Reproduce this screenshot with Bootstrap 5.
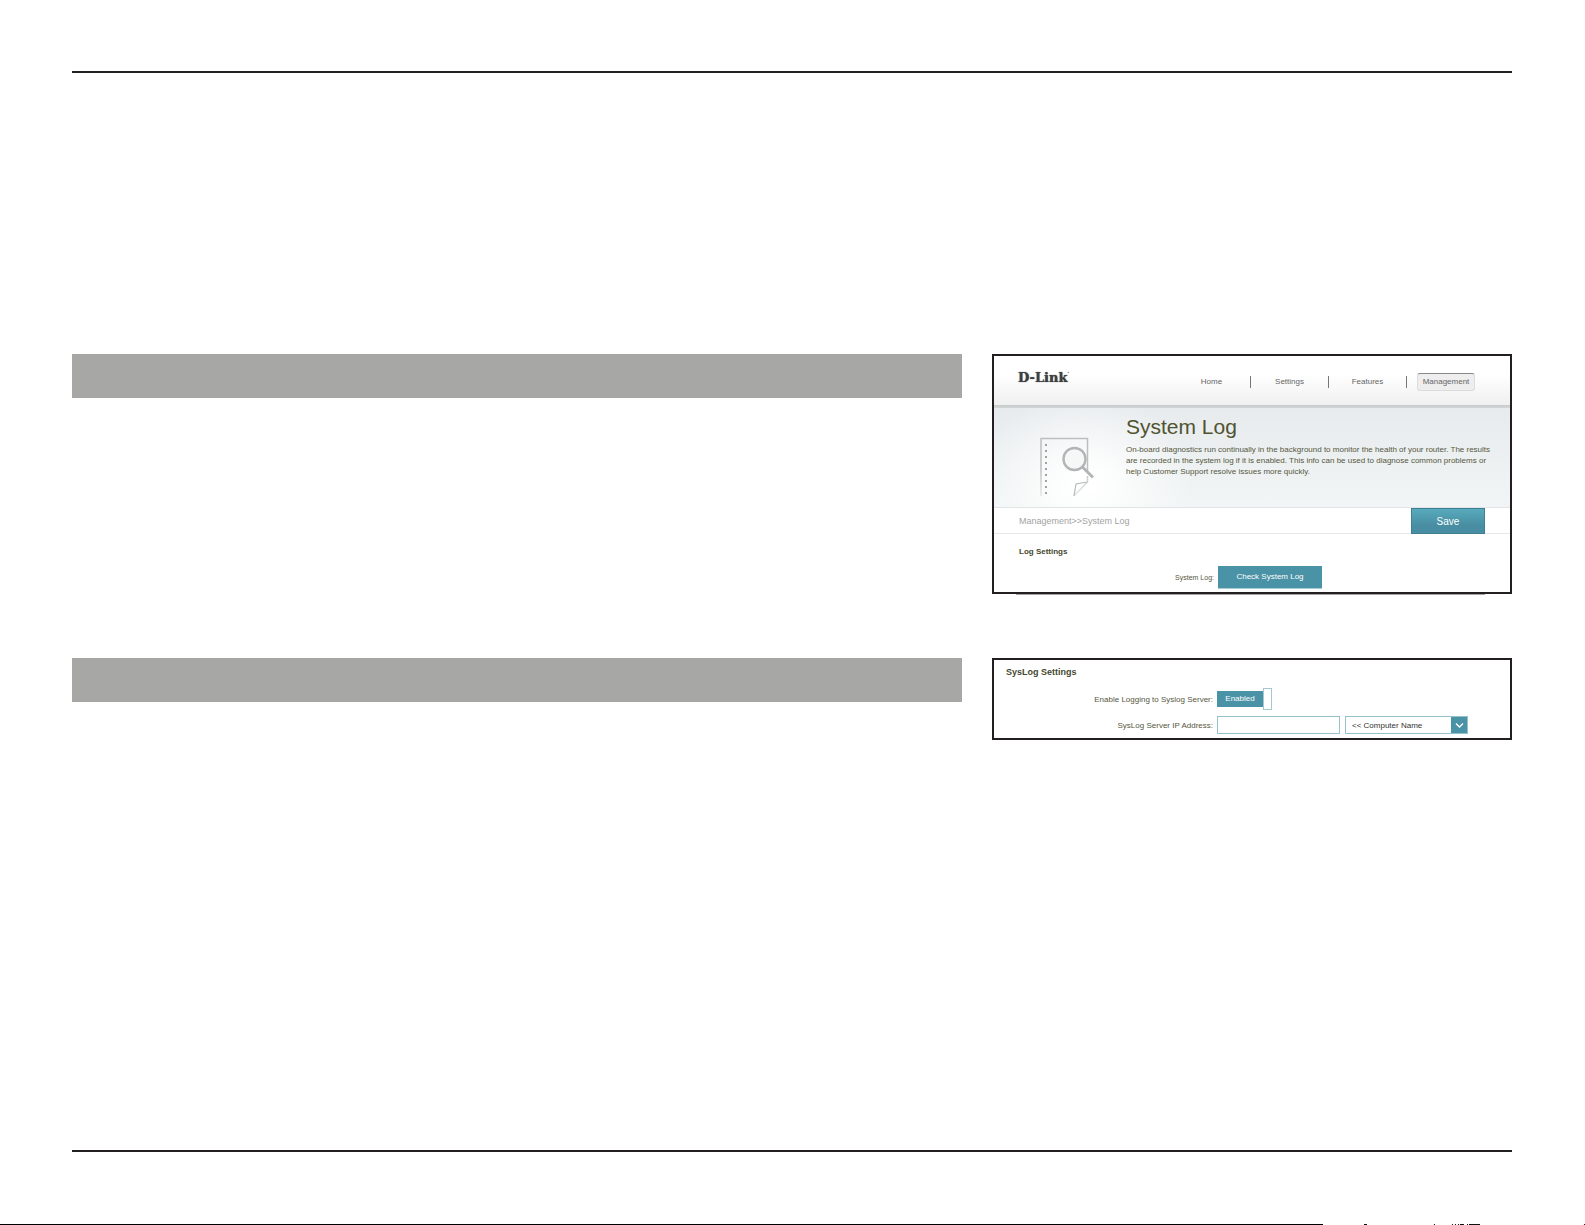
<!DOCTYPE html>
<html lang="en">
<head>
<meta charset="utf-8">
<meta name="viewport" content="width=device-width, initial-scale=1">
<title>System Log</title>
<link href="https://cdn.jsdelivr.net/npm/bootstrap@5.3.0/dist/css/bootstrap.min.css" rel="stylesheet">
<style>
  body { font-family: "Liberation Sans", Arial, sans-serif; font-size: 8px; line-height: 11px; color: #55573e; background: #fff; }
  .sheet { padding: 71px 73px 72px 72px; }
  .sheet-rule { height: 2px; background: #231f20; }
  .sections { padding-top: 281px; gap: 64px; }
  .section-row { gap: 30px; }
  .section-main { flex: 890 1 0; min-width: 0; }
  .section-side { flex: 520 1 0; min-width: 0; }
  .title-bar { height: 44px; background: #a7a7a5; }
  .panel { border: 2px solid #231f20; background: #fff; }
  .panel-log { height: 240px; }
  .panel-log::after { content: ""; position: absolute; left: 22px; right: 25px; bottom: -3px; height: 1px; background: #a3a3a3; }
  .panel-syslog { height: 82px; }

  .top-bar { height: 52px; padding: 0 35px 0 24px; background: linear-gradient(#fff 35%, #f1f0f0 94%, #c9cccc 95%, #d3d6d6 100%); }
  .brand-mark { font-family: "DejaVu Serif", serif; font-weight: 700; font-size: 13px; line-height: 16px; color: #3f4042; margin-top: 14px; text-shadow: 0 0 1px #3f4042; }
  .brand-mark sup { font-size: 4px; top: -7px; }
  .main-nav { margin-top: 17px; }
  .main-nav li { width: 78px; height: 12px; margin-top: 3px; border-right: 1px solid #777; text-align: center; }
  .main-nav li:last-child { width: 58px; height: auto; margin: 0 0 0 10px; border: 0; }
  .main-nav a { color: #666; text-decoration: none; }
  .main-nav .current { display: block; height: 18px; line-height: 15px; background: #eeeeef; border: 1px solid #dcdcdc; border-top-color: #888; border-radius: 3px; }

  .hero { height: 100px; padding-right: 15px; border-bottom: 1px solid #e0e4e5;
    background: radial-gradient(ellipse 110px 90px at 90px 75px, #fff 10%, rgba(255,255,255,0) 100%), linear-gradient(#e7ebed, #f1f5f5); }
  .hero-icon { width: 132px; padding: 28px 0 0 44px; }
  .hero h1 { font-size: 21px; line-height: 24px; font-weight: 400; margin: 7px 0 5px; color: #50532f; }
  .crumb-bar { height: 26px; padding: 0 25px; border-bottom: 1px solid #e8e8e8; font-size: 9px; line-height: 13px; color: #a3a3a3; }
  .crumb-bar span { padding-top: 2px; }
  .save-btn { width: 74px; height: 26px; padding: 0; font-size: 10px; line-height: 26px; color: #fff; border: 1px solid #3f7f92; border-radius: 0; background: linear-gradient(#57aabc, #498da2 70%); }
  .block-title { font-size: 8px; line-height: 11px; font-weight: 700; color: #45482f; margin: 0; }
  .panel-log .block-title { padding: 12px 25px 0; }
  .panel-syslog .block-title { font-size: 9px; padding: 7px 12px 0; }
  .form-line { gap: 4px; }
  .form-line label { width: 219px; text-align: right; }
  .check-line { margin-top: 9px; }
  .check-line label { width: 220px; font-size: 7px; }
  .teal-btn { height: 23px; width: 104px; padding: 0; font-size: 8px; line-height: 22px; color: #fff; background: #4a92a6; border: 0; border-bottom: 1px solid #a9cdd6; border-radius: 0; }
  .switch-btn { padding: 0; border: 0; background: none; }
  .switch-on { width: 46px; height: 16px; line-height: 16px; background: #4a92a6; color: #fff; }
  .switch-knob { width: 9px; height: 22px; border: 1px solid #a3c8d0; background: #fff; }
  .field { width: 123px; height: 18px; padding: 0 6px; font-size: 8px; line-height: 11px; border: 1px solid #97c1ca; border-radius: 0; background: #fff; color: #333; }
  .picker { width: 123px; height: 18px; border: 1px solid #97c1ca; }
  .picker select { appearance: none; border: 0; padding: 0 0 0 6px; font-size: 8px; line-height: 11px; color: #333; background: #fff; min-width: 0; }
  .picker svg { width: 16px; background: #4a92a6; }
  .switch-line { margin-top: 10px; }
  .address-line { margin-top: 6px; }
  .fields { gap: 5px; }
  .next-edge { height: 1px; }
  .next-edge-line { width: 83.5%; background: #000; }
</style>
</head>
<body>
<div class="d-flex flex-column min-vh-100">
  <main class="sheet flex-grow-1 d-flex flex-column">
    <div class="sheet-rule"></div>
    <div class="sections d-flex flex-column flex-grow-1">
      <section class="section-row d-flex">
        <div class="section-main"><div class="title-bar"></div></div>
        <div class="section-side">
          <div class="panel panel-log position-relative">
            <header class="top-bar d-flex justify-content-between align-items-start">
              <div class="brand-mark">D-Link<sup>’</sup></div>
              <nav aria-label="Main">
                <ul class="main-nav list-unstyled d-flex mb-0">
                  <li><a href="#">Home</a></li>
                  <li><a href="#">Settings</a></li>
                  <li><a href="#">Features</a></li>
                  <li><a class="current" href="#" aria-current="page">Management</a></li>
                </ul>
              </nav>
            </header>
            <div class="hero d-flex">
              <div class="hero-icon flex-shrink-0">
                <svg width="60" height="62" viewBox="0 0 60 62" fill="none" aria-hidden="true">
                  <defs><linearGradient id="fade" gradientUnits="userSpaceOnUse" x1="0" y1="2" x2="0" y2="62"><stop offset=".5" stop-color="#bcbfc0"/><stop offset="1" stop-color="#e9ebeb"/></linearGradient></defs>
                  <path d="M3 60V2.500H49.500V36M49.500 40V46L36 60" stroke="url(#fade)" stroke-width="1.500"/>
                  <path d="M36 60L38 48L49 46" stroke="#b5b8b9" stroke-width="1.200"/>
                  <path d="M8 8V58" stroke="#a0a3a4" stroke-width="2" stroke-dasharray="2 4"/>
                  <circle cx="36.500" cy="23" r="11" fill="#f6f8f8" stroke="#b3b4b5" stroke-width="2.400"/>
                  <path d="M44.500 31L55 41.500" stroke="#b3b4b5" stroke-width="3"/>
                </svg>
              </div>
              <div>
                <h1>System Log</h1>
                <p class="mb-0">On-board diagnostics run continually in the background to monitor the health of your router. The results are recorded in the system log if it is enabled. This info can be used to diagnose common problems or help Customer Support resolve issues more quickly.</p>
              </div>
            </div>
            <div class="crumb-bar d-flex justify-content-between align-items-center">
              <span>Management&gt;&gt;System Log</span>
              <button type="button" class="btn save-btn">Save</button>
            </div>
            <h2 class="block-title">Log Settings</h2>
            <div class="form-line check-line d-flex align-items-center">
              <label for="check">System Log:</label>
              <button type="button" id="check" class="btn teal-btn">Check System Log</button>
            </div>
          </div>
        </div>
      </section>
      <section class="section-row d-flex">
        <div class="section-main"><div class="title-bar"></div></div>
        <div class="section-side">
          <form class="panel panel-syslog">
            <h2 class="block-title">SysLog Settings</h2>
            <div class="form-line switch-line d-flex align-items-center">
              <label for="logging">Enable Logging to Syslog Server:</label>
              <button type="button" id="logging" class="switch-btn d-flex align-items-center" role="switch" aria-checked="true"><span class="switch-on">Enabled</span><span class="switch-knob"></span></button>
            </div>
            <div class="form-line address-line d-flex align-items-center">
              <label for="address">SysLog Server IP Address:</label>
              <div class="fields d-flex">
                <input id="address" class="field" type="text">
                <div class="picker d-flex">
                  <select class="flex-grow-1" aria-label="Computer Name"><option>&lt;&lt; Computer Name</option></select>
                  <svg viewBox="0 0 16 16" fill="none" aria-hidden="true"><path d="M5 6.500L8.500 10L12 6.500" stroke="#fff" stroke-width="1.300"/></svg>
                </div>
              </div>
            </div>
          </form>
        </div>
      </section>
    </div>
    <div class="sheet-rule"></div>
  </main>
  <div class="next-edge d-flex">
    <div class="next-edge-line"></div>
    <svg class="flex-grow-1" height="1" viewBox="0 0 262 1" preserveAspectRatio="none" aria-hidden="true"><path d="M41 0h3v1h-3zM111 0h1v1h-1zM129 0h1v1h-1zM132 0h1v1h-1zM135 0h1v1h-1zM137 0h4v1h-4zM144 0h1v1h-1zM146 0h11v1h-11zM261 0h1v1h-1z" fill="#111"/></svg>
  </div>
</div>
<script src="https://cdn.jsdelivr.net/npm/bootstrap@5.3.0/dist/js/bootstrap.bundle.min.js"></script>
</body>
</html>
